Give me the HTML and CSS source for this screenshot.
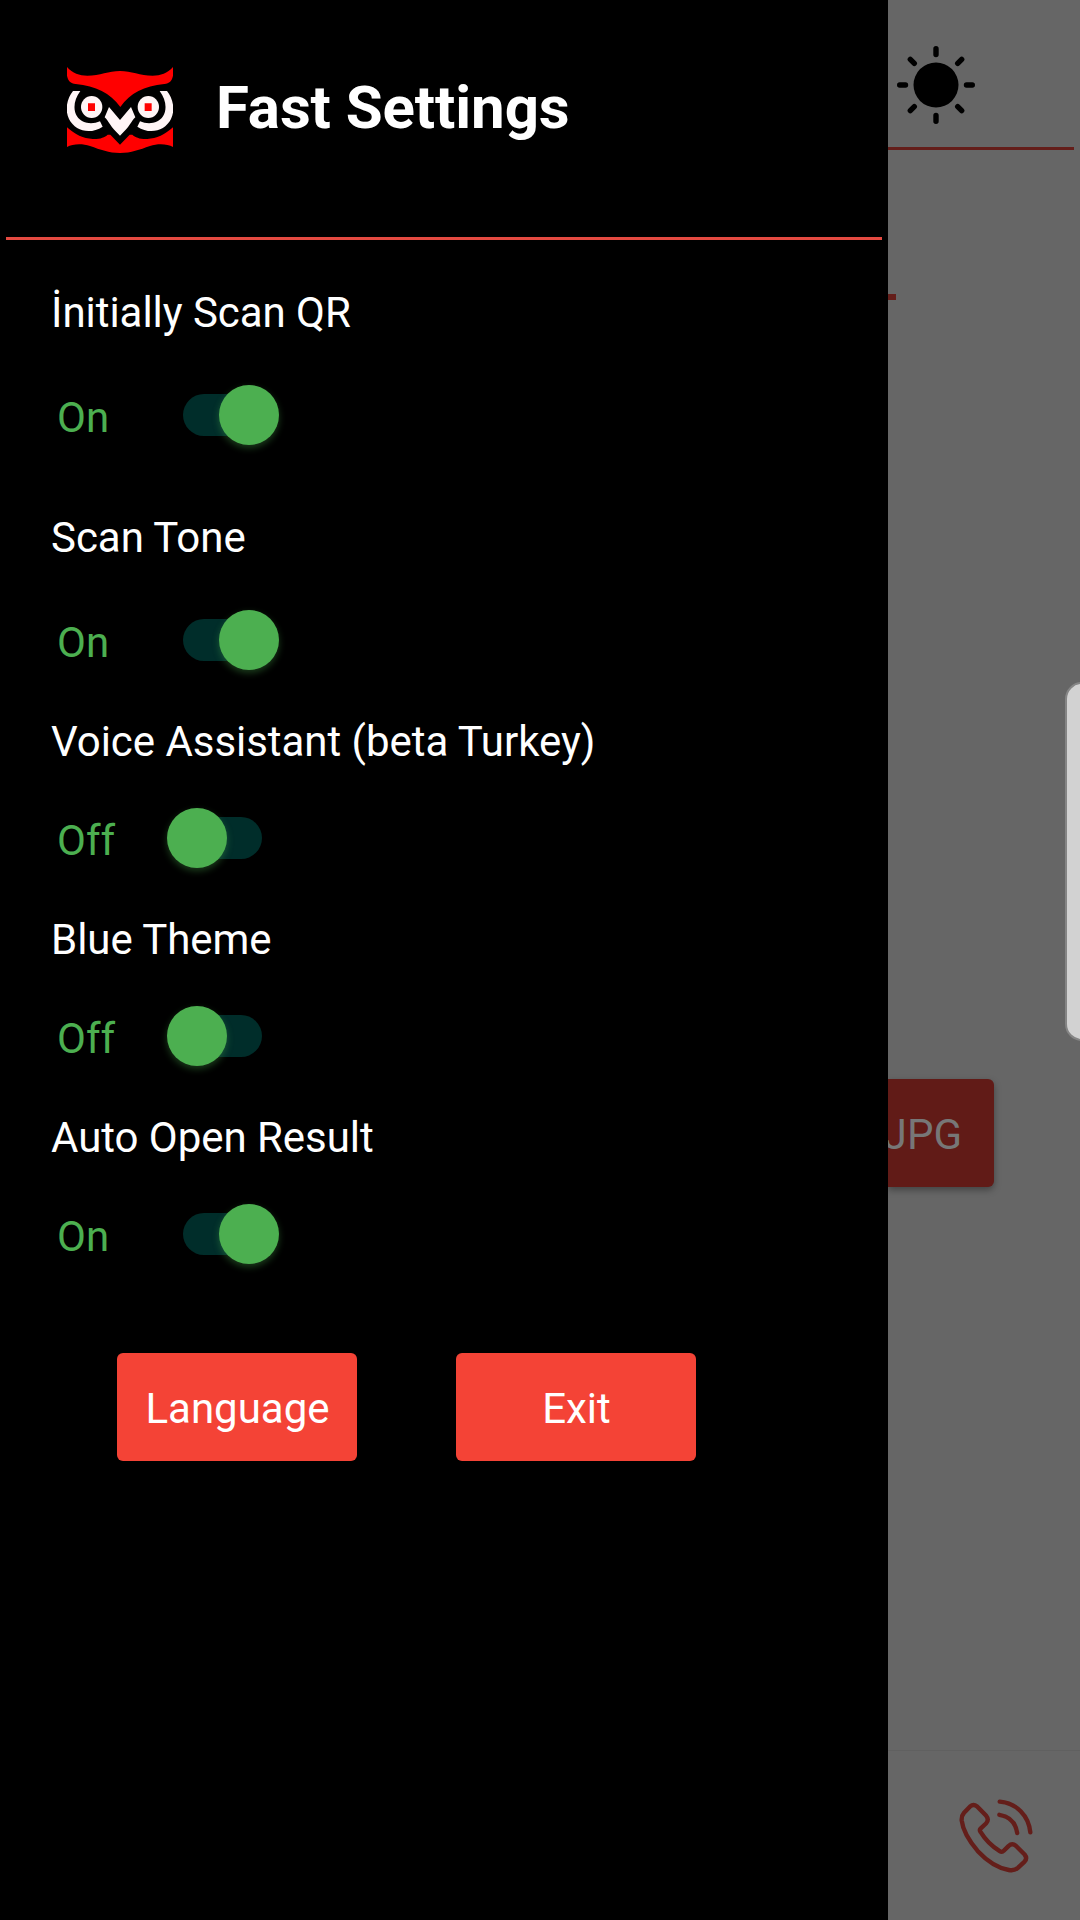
FILE: index.html
```
<!DOCTYPE html>
<html lang="en">
<head>
<meta charset="utf-8">
<title>Fast Settings</title>
<link rel="stylesheet" href="styles.css">
</head>
<body>
<div class="app">
  <aside class="drawer">
    <header class="drawer-head">
      <svg class="owl" viewBox="51 51 318 258">
        <path fill="#f00" d="M51 51C68 70 88 77 112 77C150 77 176 63 210 63C244 63 270 77 308 77C332 77 352 70 369 51V77C366 93 358 100 343 102C282 108 241 129 211 171C180 129 138 108 77 102C62 100 54 93 51 77Z"/>
        <path fill="#f00" d="M51 232C75 254 100 266 128 267C150 268 164 262 173 254H181L210 284L239 254H247C256 262 270 268 292 267C320 266 345 254 369 232V291C352 281 323 280 300 288C268 299 244 309 210 309C176 309 152 299 120 288C97 280 68 281 51 291Z"/>
        <g fill="#fff5f6">
          <path d="M69 123H91C72 148 68 178 81 199C95 221 126 225 150 214L158 230C120 255 75 243 57 207C43 178 52 144 69 123Z"/>
          <path d="M351 123H329C348 148 352 178 339 199C325 221 294 225 270 214L262 230C300 255 345 243 363 207C377 178 368 144 351 123Z"/>
          <ellipse cx="125" cy="171" rx="32" ry="33"/>
          <ellipse cx="295" cy="171" rx="32" ry="33"/>
          <path d="M177 171L210 210L243 171L256 202C243 214 240 230 210 257C180 230 177 214 164 202Z"/>
        </g>
        <path fill="#f00" d="M114 160h21v23h-21zM284 160h21v23h-21z"/>
      </svg>
      <h1 class="title">Fast Settings</h1>
    </header>
    <section class="settings">
      <div class="setting roomy">
        <div class="label">İnitially Scan QR</div>
        <div class="control"><span class="state">On</span><span class="switch on"><span class="thumb"></span></span></div>
      </div>
      <div class="setting roomy short">
        <div class="label">Scan Tone</div>
        <div class="control"><span class="state">On</span><span class="switch on"><span class="thumb"></span></span></div>
      </div>
      <div class="setting">
        <div class="label">Voice Assistant (beta Turkey)</div>
        <div class="control"><span class="state">Off</span><span class="switch"><span class="thumb"></span></span></div>
      </div>
      <div class="setting">
        <div class="label">Blue Theme</div>
        <div class="control"><span class="state">Off</span><span class="switch"><span class="thumb"></span></span></div>
      </div>
      <div class="setting">
        <div class="label">Auto Open Result</div>
        <div class="control"><span class="state">On</span><span class="switch on"><span class="thumb"></span></span></div>
      </div>
    </section>
    <div class="actions">
      <button class="btn">Language</button>
      <button class="btn">Exit</button>
    </div>
  </aside>
  <main class="page">
    <div class="topbar">
      <svg class="sun" viewBox="-39 -39 78 78">
        <circle r="22.5"/>
        <path stroke="#000" stroke-width="5.4" stroke-linecap="round" d="M0-36.3V-30.5M0 36.3V30.5M-36.3 0H-30.5M36.3 0H30.5M-25.7-25.7L-21.7-21.7M25.7-25.7L21.7-21.7M-25.7 25.7L-21.7 21.7M25.7 25.7L21.7 21.7"/>
      </svg>
    </div>
    <div class="content">
      <div class="marker"></div>
      <div class="jpg">JPG</div>
    </div>
    <nav class="bottombar">
      <svg class="phone" viewBox="268 208 220 220" fill="none" stroke="#641e1a" stroke-width="13" stroke-linecap="round" stroke-linejoin="round">
        <path d="M301 230Q311 222 322 230L349 258Q358 269 349 280L332 296Q328 300 332 306Q354 342 389 363Q396 367 401 362L415 348Q426 338 437 347L463 373Q472 384 463 394L443 413Q433 422 416 419Q368 410 324 363Q281 313 276 272Q275 258 283 249Z"/>
        <path d="M388 255Q434 262 441 309M389 216C439 220 475 258 480 307"/>
      </svg>
    </nav>
  </main>
  <div class="edge-handle"></div>
</div>
</body>
</html>
```
FILE: styles.css
```
* { box-sizing: border-box; }
body { margin: 0; }
.app {
  position: relative;
  display: flex;
  width: 1080px;
  height: 1920px;
  overflow: hidden;
  background: #666;
  font-family: Roboto, "Liberation Sans", sans-serif;
  font-size: 42px;
  line-height: 50px;
}
.drawer {
  position: relative;
  z-index: 1;
  width: 888px;
  background: #000;
  color: #fff;
}
.drawer-head {
  display: flex;
  align-items: flex-start;
  height: 240px;
  margin: 0 6px;
  padding: 67px 0 0 60.5px;
  border-bottom: 3px solid #e54a41;
}
.owl { width: 106px; height: 86px; }
.title {
  margin: 6px 0 0 43.5px;
  font-size: 60px;
  line-height: 70px;
  font-weight: 700;
  letter-spacing: -.08px;
}
.settings { padding: 48px 0 0 51px; }
.setting { height: 198px; }
.setting.roomy { height: 225px; }
.setting.roomy.short { height: 204px; }
.label { height: 50px; white-space: nowrap; letter-spacing: -.04px; }
.control { display: flex; padding: 42px 0 0 6px; }
.roomy .control { padding-top: 48px; }
.state { width: 126px; padding-top: 7px; }
.state { color: #4caf50; }
.switch {
  display: flex;
  width: 79px;
  height: 42px;
  margin-top: 8px;
  border-radius: 21px;
  background: #002d2a;
}
.thumb {
  flex: none;
  width: 60px;
  height: 60px;
  margin: -9px 0 0 -16.5px;
  border-radius: 50%;
  background: #4caf50;
  box-shadow: 0 3px 7px rgba(76, 175, 80, .35);
}
.on .thumb { margin-left: 35.5px; }
.actions { display: flex; gap: 99px; padding: 42px 0 0 117px; }
.btn {
  width: 240px;
  height: 108px;
  padding: 4px 0 0 1px;
  border: 0;
  border-radius: 6px;
  background: #f44336;
  color: #fff;
  font: inherit;
}
.page { display: flex; flex-direction: column; width: 192px; }
.topbar { height: 150px; margin-right: 6px; padding: 46px 0 0 9px; border-bottom: 3px solid #641e1a; }
.sun { display: block; width: 78px; height: 78px; }
.content { flex: 1; padding-top: 144px; }
.marker { width: 8px; height: 6px; background: #641e1a; }
.jpg {
  display: flex;
  justify-content: flex-end;
  width: 106px;
  height: 108px;
  margin-top: 779px;
  padding: 31px 32px 0 0;
  border-radius: 0 6px 6px 0;
  background: #611b17;
  color: #777;
  box-shadow: 0 3px 7px rgba(0, 0, 0, .35);
}
.bottombar { height: 170px; padding: 48px 0 0 71px; border-top: 1px solid #606060; background: #666; }
.phone { display: block; width: 74px; height: 74px; }
.edge-handle {
  position: absolute;
  top: 682px;
  right: -20px;
  width: 35px;
  height: 359px;
  border: 2px solid #858585;
  border-radius: 17px;
  background: #d2d2d2;
}
```
